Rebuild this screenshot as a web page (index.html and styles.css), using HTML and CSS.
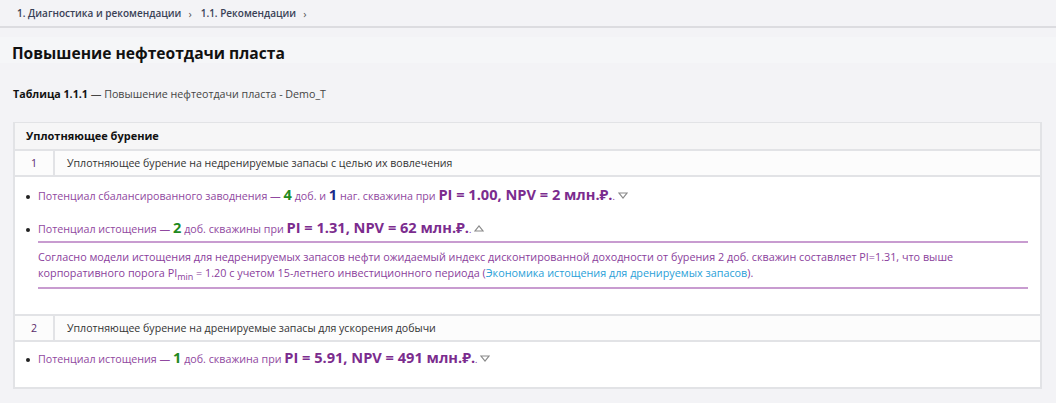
FILE: index.html
```html
<!DOCTYPE html>
<html lang="ru">
<head>
<meta charset="utf-8">
<link rel="stylesheet" href="styles.css">
</head>
<body>
<nav class="crumbs">
  <span>1. Диагностика и рекомендации</span><span class="sep">›</span>
  <span>1.1. Рекомендации</span><span class="sep">›</span>
</nav>
<main class="page">
  <h1 class="title">Повышение нефтеотдачи пласта</h1>
  <p class="caption"><b>Таблица 1.1.1</b> — Повышение нефтеотдачи пласта - Demo_T</p>
  <section class="table">
    <div class="group">Уплотняющее бурение</div>
    <div class="row"><div class="num">1</div><div class="name">Уплотняющее бурение на недренируемые запасы с целью их вовлечения</div></div>
    <ul class="items">
      <li>Потенциал сбалансированного заводнения — <b class="g">4</b> доб. и <b class="b">1</b> наг. скважина при <b class="v">PI = 1.00, NPV = 2 млн.₽.</b><span class="dot">.</span> <svg class="tri" viewBox="0 0 10 7" width="10" height="7"><path d="M1 1 H9 L5 6 Z"/></svg></li>
      <li>Потенциал истощения — <b class="g">2</b> доб. скважины при <b class="v">PI = 1.31, NPV = 62 млн.₽.</b><span class="dot">.</span> <svg class="tri" viewBox="0 0 10 7" width="10" height="7"><path d="M1 6 H9 L5 1 Z"/></svg>
        <div class="detail">Согласно модели истощения для недренируемых запасов нефти ожидаемый индекс дисконтированной доходности от бурения 2 доб. скважин составляет PI=1.31, что выше<br>корпоративного порога PI<sub>min</sub> = 1.20 с учетом 15-летнего инвестиционного периода (<a href="#">Экономика истощения для дренируемых запасов</a>).</div>
      </li>
    </ul>
    <div class="row"><div class="num">2</div><div class="name">Уплотняющее бурение на дренируемые запасы для ускорения добычи</div></div>
    <ul class="items last">
      <li>Потенциал истощения — <b class="g">1</b> доб. скважина при <b class="v">PI = 5.91, NPV = 491 млн.₽.</b><span class="dot">.</span> <svg class="tri" viewBox="0 0 10 7" width="10" height="7"><path d="M1 1 H9 L5 6 Z"/></svg></li>
    </ul>
  </section>
</main>
</body>
</html>
```
FILE: styles.css
```css
html, body { margin: 0; padding: 0; }
body {
  background: #f3f3f6;
  font-family: "Open Sans", "Noto Sans", sans-serif;
  color: #333;
  width: 1056px;
  height: 403px;
  overflow: hidden;
}
.crumbs {
  height: 26px;
  border-bottom: 2px solid #dcdce0;
  padding-left: 17px;
  display: flex;
  align-items: center;
  font-size: 10px;
  font-weight: 600;
  color: #3a4256;
  gap: 7px;
}
.crumbs .sep { font-weight: 400; font-size: 11px; color: #555; margin-right: 2px; }
.page { padding: 0 14px 0 13px; }
.title {
  box-sizing: border-box;
  margin: 9px -14px 0 -13px;
  padding: 5px 12px 0;
  height: 26px;
  line-height: 22px;
  background: #f5f6f8;
  font-size: 15.6px;
  font-weight: 700;
  color: #111;
}
.caption {
  margin: 24px 0 0 0;
  font-size: 10.7px;
  color: #444;
  line-height: 14px;
}
.caption b { color: #111; }
.table {
  margin-top: 21px;
  background: #fff;
  border: 2px solid #e2e3e6;
  border-top-width: 1px;
}
.group {
  height: 26px;
  line-height: 26px;
  padding-left: 11px;
  background: #f6f6f7;
  border-bottom: 2px solid #e2e3e6;
  font-size: 11px;
  font-weight: 700;
  color: #111;
}
.row {
  display: flex;
  height: 24px;
  line-height: 24px;
  font-size: 10.6px;
  color: #333;
  border-bottom: 2px solid #e2e3e6;
  background: #fcfcfc;
}
.num { width: 38px; text-align: center; border-right: 2px solid #e2e3e6; color: #5a2a6a; }
.name { padding-left: 12px; }
.items {
  margin: 0;
  padding: 9px 12px 25px 23px;
  border-bottom: 2px solid #e2e3e6;
  font-size: 10.7px;
  color: #9048a0;
}
.items.last { border-bottom: 0; padding-top: 7px; padding-bottom: 18px; }
.items li { line-height: 20px; list-style: none; position: relative; }
.items li + li { margin-top: 13px; }
.items li::before {
  content: "";
  position: absolute;
  left: -12px; top: 9px;
  width: 4px; height: 4px;
  border-radius: 50%;
  background: #222;
}
.g, .b, .v, .dot { line-height: 1; }
.g { color: #1f8a1f; font-size: 14.6px; }
.b { color: #1c2a8a; font-size: 14.6px; }
.v { color: #7b2c8e; font-size: 14.6px; }
.dot { font-size: 9px; color: #7b2c8e; }
.tri { fill: none; stroke: #8a8a8a; stroke-width: 1.2; vertical-align: 1px; }
.detail {
  margin-top: 2px;
  border-top: 2px solid #c89cd0;
  border-bottom: 2px solid #c89cd0;
  padding: 6px 0 6px 0;
  line-height: 16px;
  font-size: 10.8px;
  color: #8a3e9c;
}
.detail sub { font-size: 9px; vertical-align: -3px; line-height: 0; }
.detail a { color: #2a9fd8; text-decoration: none; }
```
